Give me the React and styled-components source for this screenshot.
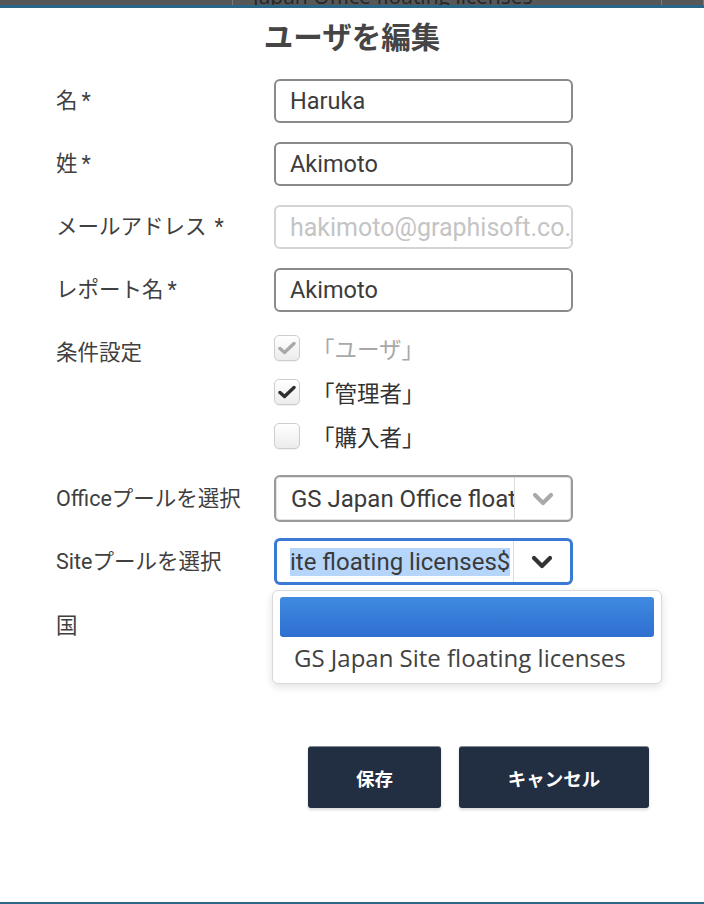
import React from "react";
import styled, { createGlobalStyle } from "styled-components";

const Global = createGlobalStyle`
  html, body { margin: 0; padding: 0; background: #fff; }
  * { box-sizing: border-box; }
`;

const Page = styled.div`
  width: 704px;
  height: 904px;
  display: flex;
  flex-direction: column;
  font-family: Roboto, "Noto Sans CJK JP", sans-serif;
  color: #444;
  overflow: hidden;
`;

const Backdrop = styled.div`
  height: 5px;
  flex: none;
  background: #575757;
  display: flex;
  overflow: hidden;
`;

const BackCell = styled.div`
  width: ${(p) => p.$w}px;
  flex: none;
  border-right: 1px solid #7a7a7a;
  padding-left: ${(p) => p.$pad || 0}px;
  font-family: "Open Sans", sans-serif;
  font-size: 21px;
  line-height: 24px;
  margin-top: -16px;
  color: #262626;
  white-space: nowrap;
`;

const Modal = styled.div`
  flex: 1;
  border-top: 3px solid #2a6686;
  border-bottom: 2px solid #2a6686;
  background: #fff;
  display: flex;
  flex-direction: column;
`;

const Title = styled.h2`
  margin: 0;
  padding-top: 9px;
  text-align: center;
  font-family: "Noto Sans CJK JP", sans-serif;
  font-size: 29.5px;
  line-height: 37px;
  font-weight: 700;
  color: #454545;
`;

const Form = styled.div`
  margin-top: 25px;
  padding-left: 56px;
  display: flex;
  flex-direction: column;
`;

const Row = styled.div`
  display: grid;
  grid-template-columns: 218px 299px;
  align-items: ${(p) => (p.$top ? "start" : "center")};
  min-height: ${(p) => p.$h || 44}px;
  margin-top: ${(p) => p.$mt || 0}px;
  margin-bottom: ${(p) => p.$mb ?? 19}px;
`;

const Label = styled.div`
  font-size: 21.5px;
  line-height: 26px;
  color: #404040;
  white-space: nowrap;
  margin-top: ${(p) => p.$mt || 0}px;
`;

const Star = styled.span`
  margin-left: ${(p) => p.$gap}px;
`;

const TextInput = styled.div`
  height: 44px;
  border: 2px solid ${(p) => (p.$disabled ? "#d4d4d4" : "#8a8a8a")};
  border-radius: 6px;
  padding: 0 14px;
  display: flex;
  align-items: center;
  font-size: ${(p) => (p.$disabled ? 25 : 23.5)}px;
  color: ${(p) => (p.$disabled ? "#c4c4c4" : "#3c3c3c")};
  white-space: nowrap;
  overflow: hidden;
`;

const CheckList = styled.div`
  display: flex;
  flex-direction: column;
  gap: 18px;
`;

const CheckRow = styled.div`
  display: flex;
  align-items: center;
  height: 26px;
`;

const Box = styled.div`
  width: 26px;
  height: 26px;
  border: 1px solid #cdcdcd;
  border-radius: 5px;
  background: linear-gradient(#ffffff, #ececec);
  box-shadow: 0 1px 1px rgba(0, 0, 0, 0.06);
  display: flex;
  align-items: center;
  justify-content: center;
  flex: none;
`;

const CheckText = styled.span`
  margin-left: 12px;
  font-family: "Noto Sans CJK JP", sans-serif;
  font-size: 22.5px;
  color: ${(p) => (p.$disabled ? "#a8a8a8" : "#333")};
`;

const Select = styled.div`
  position: relative;
  height: 47px;
  border: ${(p) => (p.$focus ? "3px solid #3a7ad5" : "2px solid #9a9a9a")};
  border-radius: 6px;
  box-shadow: ${(p) => (p.$focus ? "none" : "inset 0 0 0 1px #e4e4e4")};
  display: flex;
  align-items: stretch;
  background: #fff;
`;

const SelectValue = styled.div`
  flex: 1;
  min-width: 0;
  overflow: hidden;
  display: flex;
  align-items: center;
  padding-left: ${(p) => (p.$focus ? 13 : 15)}px;
  font-size: 24px;
  color: #3a3a3a;
  white-space: nowrap;
`;

const Highlight = styled.span`
  background: #b5d5fb;
  line-height: 28px;
  display: inline-block;
`;

const Arrow = styled.div`
  width: 57px;
  flex: none;
  border-left: 1px solid #dcdcdc;
  display: flex;
  align-items: center;
  justify-content: center;
`;

const Dropdown = styled.div`
  position: absolute;
  top: 49px;
  left: -5px;
  width: 390px;
  background: #fff;
  border: 1px solid #dadada;
  border-radius: 6px;
  box-shadow: 0 3px 8px rgba(0, 0, 0, 0.12);
  padding: 6px 7px 6px;
  z-index: 2;
`;

const Option = styled.div`
  height: 40px;
  border-radius: 3px;
  background: ${(p) => (p.$active ? "linear-gradient(#3f8ae0, #2f6fd0)" : "transparent")};
  padding-left: 14px;
  display: flex;
  align-items: center;
  font-family: "Open Sans", sans-serif;
  font-size: 24px;
  color: #424242;
  white-space: nowrap;
`;

const Footer = styled.div`
  margin-top: 95px;
  display: flex;
  justify-content: flex-end;
  gap: 18px;
  padding-right: 55px;
`;

const Button = styled.button`
  height: 62px;
  width: ${(p) => p.$w}px;
  background: #222e41;
  border: none;
  border-top: 1px solid #848a95;
  border-radius: 3px;
  box-shadow: 0 2px 3px rgba(0, 0, 0, 0.15);
  color: #fff;
  font-family: "Noto Sans CJK JP", sans-serif;
  font-size: 18.5px;
  font-weight: 700;
  cursor: pointer;
`;

const Check = ({ color }) => (
  <svg width="18" height="14" viewBox="0 0 18 14">
    <polyline
      points="2,7.5 6.5,11.5 16,2.5"
      fill="none"
      stroke={color}
      strokeWidth="3.4"
      strokeLinecap="round"
      strokeLinejoin="round"
    />
  </svg>
);

const Chevron = ({ color }) => (
  <svg width="22" height="14" viewBox="0 0 22 14">
    <polyline
      points="3,3 11,11 19,3"
      fill="none"
      stroke={color}
      strokeWidth="4.2"
      strokeLinecap="round"
      strokeLinejoin="round"
    />
  </svg>
);

const fields = [
  { label: "名", gap: 4, value: "Haruka" },
  { label: "姓", gap: 4, value: "Akimoto" },
  { label: "メールアドレス", gap: 8, value: "hakimoto@graphisoft.co.jp", disabled: true },
  { label: "レポート名", gap: 4, value: "Akimoto" },
];

const roles = [
  { label: "「ユーザ」", checked: true, disabled: true },
  { label: "「管理者」", checked: true },
  { label: "「購入者」", checked: false },
];

export default function App() {
  return (
    <Page>
      <Global />
      <Backdrop>
        <BackCell $w={233} />
        <BackCell $w={429} $pad={20}>Japan Office floating licenses</BackCell>
        <BackCell $w={42} />
      </Backdrop>
      <Modal>
        <Title>ユーザを編集</Title>
        <Form>
          {fields.map((f) => (
            <Row key={f.label}>
              <Label>
                {f.label}
                <Star $gap={f.gap}>*</Star>
              </Label>
              <TextInput $disabled={f.disabled}>{f.value}</TextInput>
            </Row>
          ))}
          <Row $top $mt={4} $mb={26}>
            <Label $mt={5}>条件設定</Label>
            <CheckList>
              {roles.map((r) => (
                <CheckRow key={r.label}>
                  <Box>{r.checked && <Check color={r.disabled ? "#a9a9a9" : "#2e2e2e"} />}</Box>
                  <CheckText $disabled={r.disabled}>{r.label}</CheckText>
                </CheckRow>
              ))}
            </CheckList>
          </Row>
          <Row $h={47} $mb={16}>
            <Label>Officeプールを選択</Label>
            <Select>
              <SelectValue>GS Japan Office floating licenses</SelectValue>
              <Arrow>
                <Chevron color="#a9a9a9" />
              </Arrow>
            </Select>
          </Row>
          <Row $h={47} $mb={16}>
            <Label>Siteプールを選択</Label>
            <Select $focus>
              <SelectValue $focus>
                <Highlight>ite floating licenses$</Highlight>
              </SelectValue>
              <Arrow>
                <Chevron color="#333" />
              </Arrow>
              <Dropdown>
                <Option $active />
                <Option>GS Japan Site floating licenses</Option>
              </Dropdown>
            </Select>
          </Row>
          <Row $h={50} $mb={0}>
            <Label>国</Label>
            <div />
          </Row>
        </Form>
        <Footer>
          <Button $w={133}>保存</Button>
          <Button $w={190}>キャンセル</Button>
        </Footer>
      </Modal>
    </Page>
  );
}
